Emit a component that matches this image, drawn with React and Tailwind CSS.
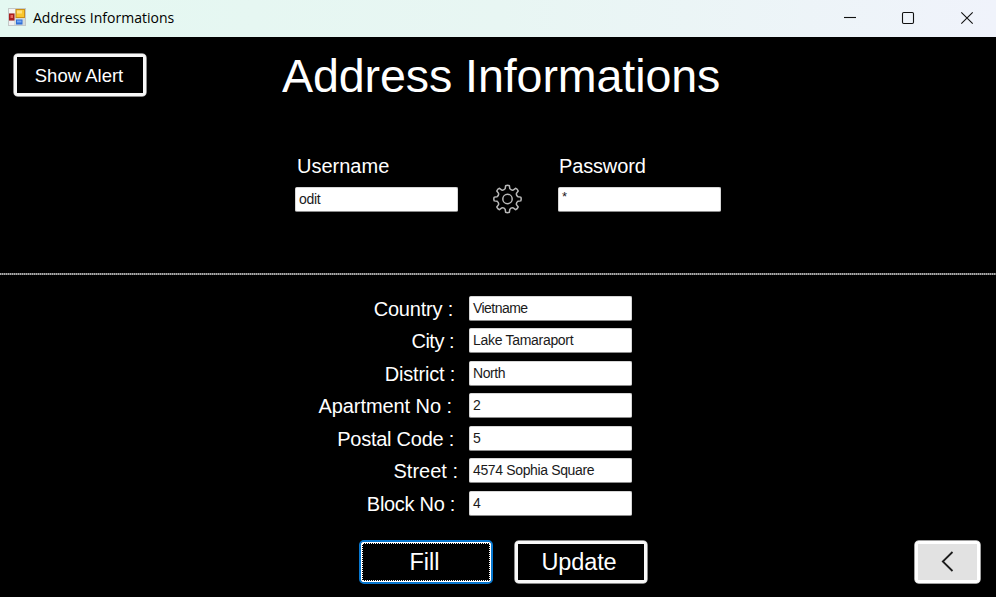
import React from "react";

const rows = [
  { label: "Country :", value: "Vietname", labelClass: "pr-[16px] tracking-[-0.2px]", valueClass: "tracking-[-0.55px]" },
  { label: "City :", value: "Lake Tamaraport", labelClass: "pr-[15px] tracking-[-0.5px]", valueClass: "tracking-[-0.3px]" },
  { label: "District :", value: "North", labelClass: "pr-[14px] tracking-[-0.2px]", valueClass: "tracking-[-0.45px]" },
  { label: "Apartment No :", value: "2", labelClass: "pr-[17px] tracking-[-0.07px]", valueClass: "" },
  { label: "Postal Code :", value: "5", labelClass: "pr-[15px] tracking-[-0.25px]", valueClass: "" },
  { label: "Street :", value: "4574 Sophia Square", labelClass: "pr-[11px]", valueClass: "tracking-[-0.36px]" },
  { label: "Block No :", value: "4", labelClass: "pr-[14px] tracking-[-0.3px]", valueClass: "" },
];

function AppIcon() {
  return (
    <svg width="18" height="18" viewBox="0 0 18 18" className="shrink-0">
      <rect x="0.5" y="0.5" width="17" height="17" fill="#d4dbda" stroke="#c3c9c8" />
      <rect x="1" y="1" width="6" height="4" fill="#f4f4f4" />
      <rect x="1" y="13" width="5" height="4" fill="#f0f0f0" />
      <rect x="7.5" y="1" width="9.5" height="9" fill="#c98f18" />
      <rect x="8.5" y="2" width="7.5" height="7" fill="#f9c62c" />
      <rect x="9" y="2.5" width="5" height="3" fill="#ffe07a" />
      <rect x="1" y="5.5" width="5.5" height="7" fill="#a91d1d" />
      <rect x="2.5" y="7" width="2.5" height="3" fill="#e8695c" />
      <rect x="8" y="11.5" width="6.5" height="5" fill="#2f6fd8" />
      <rect x="9" y="12.5" width="4.5" height="2" fill="#79aaf2" />
    </svg>
  );
}

function Gear() {
  const c = 15;
  const pts = [];
  for (let i = 0; i < 8; i++) {
    const a = (i * Math.PI) / 4 - Math.PI / 2;
    const p = (r, d) => `${(c + r * Math.cos(a + d)).toFixed(2)} ${(c + r * Math.sin(a + d)).toFixed(2)}`;
    pts.push(`${i === 0 ? "M" : "L"}${p(10.6, -0.22)} L${p(13.4, -0.14)} Q${p(14.1, 0)} ${p(13.4, 0.14)} L${p(10.6, 0.22)} Q${p(9.2, 0.39)} ${p(10.6, 0.565)}`);
  }
  return (
    <svg width="30" height="30" viewBox="0.5 0 30 30" fill="none" stroke="#b8b8b8" strokeWidth="1.5" strokeLinejoin="round">
      <path d={pts.join(" ") + "Z"} />
      <circle cx="15" cy="15" r="4.7" />
    </svg>
  );
}

function Field({ value, className = "leading-[24px]" }) {
  return (
    <div className="h-[25px] w-[163px] shrink-0 rounded-[2px] border border-[#d6d6d6] border-b-[#8c8c8c] bg-white pl-[3px] text-[14px] leading-[23.5px] text-[#1a1a1a]">
      <span className={"block whitespace-nowrap " + className}>{value}</span>
    </div>
  );
}

export default function App() {
  return (
    <div className="flex h-[597px] w-[996px] flex-col overflow-hidden bg-black font-['Liberation_Sans',Arial,sans-serif] text-white">
      <header className="flex h-[37px] shrink-0 items-start bg-linear-to-r from-[#e4f8f1] via-[#e8f6f3] to-[#f0f3fb] text-black">
        <div className="flex grow items-start pt-2 pl-2">
          <AppIcon />
          <span className="ml-[7px] font-['Open_Sans','Noto_Sans',sans-serif] text-[14px] leading-[20px] tracking-[0.02px]">Address Informations</span>
        </div>
        <svg width="156" height="37" viewBox="0 0 156 37" fill="none" stroke="#111" strokeWidth="1.1">
          <path d="M4 17.5h12" />
          <rect x="62.5" y="12.5" width="11" height="11" rx="1.2" />
          <path d="M121.3 12.3l11.4 11.4M132.7 12.3l-11.4 11.4" />
        </svg>
      </header>

      <div className="flex h-[115px] shrink-0 items-start pl-[13px]">
        <button className="mt-4 flex h-[44px] w-[134px] items-center justify-center rounded-[5px] border border-[#8a8a8a]">
          <span className="flex h-full w-full items-center justify-center rounded-[3px] border-3 border-[#f8f8f8] pt-px pr-[2px] text-[18.5px] whitespace-nowrap">
            Show Alert
          </span>
        </button>
        <h1 className="mt-[12px] ml-[135px] text-[46.6px] leading-[54px] tracking-[-0.1px] whitespace-nowrap">Address Informations</h1>
      </div>

      <div className="flex h-[121px] shrink-0 pl-[295px]">
        <div className="w-[163px]">
          <div className="h-[35px] pl-[2px] text-[20px] leading-[29px]">Username</div>
          <Field value="odit" className="tracking-[-0.3px]" />
        </div>
        <div className="w-[100px] pt-[32px] pl-[35px]">
          <Gear />
        </div>
        <div className="w-[163px]">
          <div className="h-[35px] pl-[1px] text-[20px] leading-[29px] tracking-[-0.15px]">Password</div>
          <Field value="*" className="text-[13px] leading-[18px]" />
        </div>
      </div>

      <div className="h-[2px] shrink-0 bg-[repeating-linear-gradient(90deg,#a8a8a8_0_1px,#626262_1px_2px)]" />

      <div className="flex shrink-0 flex-col pt-[20.5px]">
        {rows.map((r) => (
          <div key={r.label} className="flex h-[32.5px] shrink-0 items-start">
            <div className={"w-[469px] pt-px text-right text-[20px] leading-[25px] whitespace-nowrap " + r.labelClass}>{r.label}</div>
            <Field value={r.value} className={r.valueClass} />
          </div>
        ))}
      </div>

      <div className="mt-[17px] flex shrink-0 items-start pl-[359px] text-[23.5px]">
        <button className="flex h-[44px] w-[134px] items-center justify-center rounded-[5px] border-2 border-[#0878d0]">
          <span className="flex h-full w-full items-center justify-center rounded-[2px] border border-white">
            <span className="flex h-full w-full items-center justify-center border border-dotted border-white pt-[2px] pr-[3px]">Fill</span>
          </span>
        </button>
        <button className="ml-[21px] flex h-[44px] w-[134px] items-center justify-center rounded-[5px] border border-[#8a8a8a]">
          <span className="flex h-full w-full items-center justify-center rounded-[3px] border-3 border-[#f8f8f8] pt-[2px] pr-[4px] tracking-[-0.1px]">
            Update
          </span>
        </button>
        <button className="ml-[266px] flex h-[44px] w-[67px] items-center justify-center rounded-[5px] border border-[#a0a0a0]">
          <span className="flex h-full w-full items-center justify-center rounded-[3px] border-3 border-white bg-[#e2e2e2]">
            <svg width="14" height="22" viewBox="0 0 14 22" fill="none" stroke="#1c1c1c" strokeWidth="1.8">
              <path d="M11.5 1L1.8 10.5l9.7 9.5" />
            </svg>
          </span>
        </button>
      </div>
    </div>
  );
}
